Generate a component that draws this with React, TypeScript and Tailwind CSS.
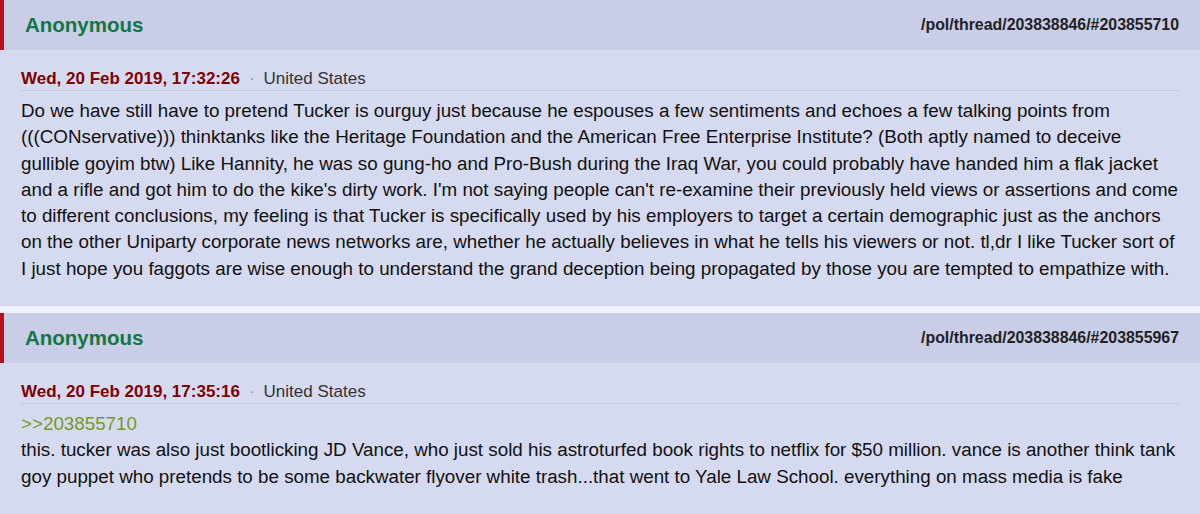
import React from "react";

const font = { fontFamily: '"Liberation Sans", Arial, sans-serif' };

function Post({
  id,
  date,
  quote,
  lines,
}: {
  id: string;
  date: string;
  quote?: string;
  lines: string[];
}) {
  return (
    <div className="bg-[#d6daf0]">
      <div className="flex h-[50px] items-center justify-between border-l-4 border-[#b5101b] bg-[#c9cde8] pl-[21px] pr-[21px]">
        <span className="text-[20.5px] font-bold text-[#117743]">Anonymous</span>
        <span className="text-[15.9px] font-bold text-[#222]">/pol/thread/203838846/#{id}</span>
      </div>
      <div className="px-[21px] pt-[19px]">
        <div className="flex h-[22px] items-start gap-[9px] border-b border-[#c3c7e0] text-[17px] leading-[20px]">
          <span className="font-bold text-[#800000]">{date}</span>
          <span className="text-[#999]">·</span>
          <span className="text-[#333]">United States</span>
        </div>
        <div className="mt-[7px] text-[18.8px] leading-[26.3px] text-[#111]">
          {quote && <div className="text-[#789922]">{quote}</div>}
          {lines.map((l, i) => (
            <div key={i} className="whitespace-nowrap">
              {l}
            </div>
          ))}
        </div>
      </div>
    </div>
  );
}

export default function App() {
  return (
    <div style={font} className="h-[514px] w-[1200px] overflow-hidden bg-[#d6daf0]">
      <div className="h-[306px]">
        <Post
          id="203855710"
          date="Wed, 20 Feb 2019, 17:32:26"
          lines={[
            "Do we have still have to pretend Tucker is ourguy just because he espouses a few sentiments and echoes a few talking points from",
            "(((CONservative))) thinktanks like the Heritage Foundation and the American Free Enterprise Institute? (Both aptly named to deceive",
            "gullible goyim btw) Like Hannity, he was so gung-ho and Pro-Bush during the Iraq War, you could probably have handed him a flak jacket",
            "and a rifle and got him to do the kike's dirty work. I'm not saying people can't re-examine their previously held views or assertions and come",
            "to different conclusions, my feeling is that Tucker is specifically used by his employers to target a certain demographic just as the anchors",
            "on the other Uniparty corporate news networks are, whether he actually believes in what he tells his viewers or not. tl,dr I like Tucker sort of",
            "I just hope you faggots are wise enough to understand the grand deception being propagated by those you are tempted to empathize with.",
          ]}
        />
      </div>
      <div className="h-[7px] bg-[#eef2ff]" />
      <Post
        id="203855967"
        date="Wed, 20 Feb 2019, 17:35:16"
        quote=">>203855710"
        lines={[
          "this. tucker was also just bootlicking JD Vance, who just sold his astroturfed book rights to netflix for $50 million. vance is another think tank",
          "goy puppet who pretends to be some backwater flyover white trash...that went to Yale Law School. everything on mass media is fake",
        ]}
      />
    </div>
  );
}
